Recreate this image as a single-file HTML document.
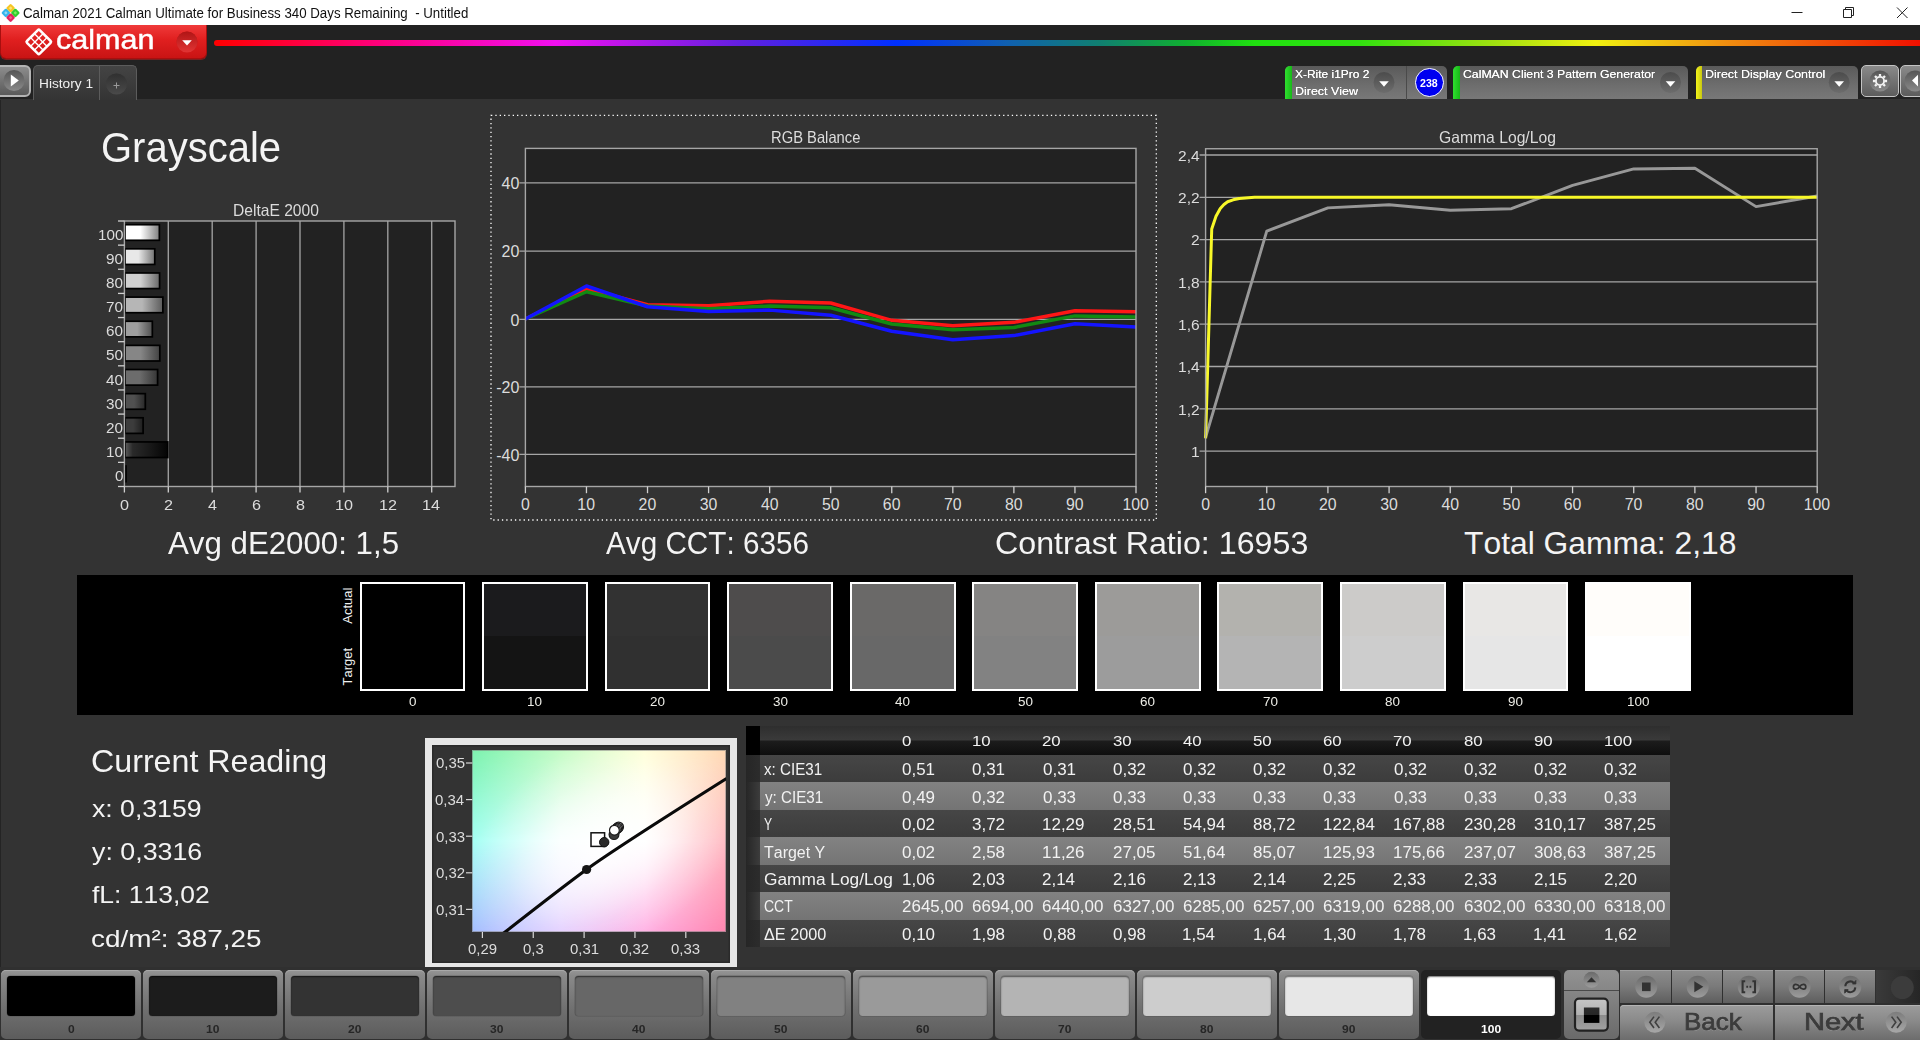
<!DOCTYPE html>
<html lang="en"><head><meta charset="utf-8"><title>Calman 2021 - Grayscale</title>
<style>
html,body{margin:0;padding:0;background:#333;}
body{width:1920px;height:1040px;overflow:hidden;position:relative;font-family:"Liberation Sans",sans-serif;font-kerning:none;}
.t{position:absolute;white-space:nowrap;line-height:1;transform-origin:0 0;}
.b{position:absolute;box-sizing:border-box;}
svg{position:absolute;left:0;top:0;overflow:visible;}
svg text{font-family:"Liberation Sans",sans-serif;font-kerning:none;}
</style></head><body>
<div class="b" style="left:0.00px;top:0.00px;width:1920.00px;height:25.30px;background:#fff;"></div>
<svg width="24" height="26" viewBox="0 0 24 26">
<g transform="translate(10.6,12.8) rotate(45)">
<rect x="-6.6" y="-6.6" width="6.7" height="6.7" rx="1.3" fill="#f6c624"/>
<rect x="0.1" y="-6.6" width="6.7" height="6.7" rx="1.3" fill="#2fd02f"/>
<rect x="-6.6" y="0.1" width="6.7" height="6.7" rx="1.3" fill="#35b4ec"/>
<rect x="0.1" y="0.1" width="6.7" height="6.7" rx="1.3" fill="#e3245f"/>
<rect x="-4.6" y="-4.6" width="2.6" height="2.6" rx=".6" fill="#fbe27a"/>
<rect x="2.1" y="-4.6" width="2.6" height="2.6" rx=".6" fill="#7cec5c"/>
<rect x="-4.6" y="2.1" width="2.6" height="2.6" rx=".6" fill="#8fd8f6"/>
<rect x="2.1" y="2.1" width="2.6" height="2.6" rx=".6" fill="#f0608a"/>
</g></svg>
<div class="t" style="left:22.72px;top:7.00px;font-size:13.95px;color:#111;transform:scaleX(0.9533);white-space:pre;">Calman 2021 Calman Ultimate for Business 340 Days Remaining  - Untitled</div>
<svg width="1920" height="26" viewBox="0 0 1920 26" fill="none" stroke="#222" stroke-width="1">
<path d="M1791.5 12.5H1802.5"/>
<path d="M1843.5 9.5h8v8h-8z M1845.5 9.5v-2h8v8h-2"/>
<path d="M1897 7.5l10.5 10.5M1907.5 7.5L1897 18"/>
</svg>
<div class="b" style="left:0.00px;top:25.30px;width:1920.00px;height:74.20px;background:#222;"></div>
<div class="b" style="left:0.00px;top:99.50px;width:1.20px;height:870.00px;background:#242424;"></div>
<div class="b" style="left:0.00px;top:25.30px;width:206.50px;height:33.70px;background:linear-gradient(#f03a3a,#e01f1f 45%,#c91414);border-radius:0 0 6px 6px;border:1px solid #a80f0f;border-top:none;box-shadow:0 1px 0 #7a2020;"></div>
<svg width="210" height="62" viewBox="0 0 210 62">
<g transform="translate(38.8,41.9) rotate(45) scale(1.07)" fill="#fff">
<path fill-rule="evenodd" d="M-9.6 -7.2a2.4 2.4 0 0 1 2.4 -2.4h14.4a2.4 2.4 0 0 1 2.4 2.4v14.4a2.4 2.4 0 0 1 -2.4 2.4h-14.4a2.4 2.4 0 0 1 -2.4 -2.4z
M-7.2 -7.2v4h4v-4z M-1.9 -7.2v4h3.8v-4z M3.2 -7.2v4h4v-4z
M-7.2 -1.9v3.8h4v-3.8z M-1.9 -1.9v3.8h3.8v-3.8z M3.2 -1.9v3.8h4v-3.8z
M-7.2 3.2v4h4v-4z M-1.9 3.2v4h3.8v-4z M3.2 3.2v4h4v-4z"/>
</g>
<circle cx="187" cy="42" r="10.5" fill="#c41a1a"/>
<circle cx="187" cy="42" r="10.5" fill="url(#ddred)"/>
<path d="M182.2 40.2h9.6l-4.8 5.2z" fill="#fff"/>
<defs><linearGradient id="ddred" x1="0" y1="0" x2="0" y2="1"><stop offset="0" stop-color="#b01515"/><stop offset="1" stop-color="#e23434"/></linearGradient></defs>
</svg>
<div class="t" style="left:55.90px;top:26.00px;font-size:27.60px;color:#fff;transform:scaleX(1.1069);-webkit-text-stroke:.45px #fff;">calman</div>
<div class="b" style="left:214.00px;top:40.00px;width:1706.00px;height:5.50px;background:linear-gradient(90deg,#ff0000 0,#ff0080 10%,#f010f0 20%,#6020e0 31%,#0030ff 40%,#1060b0 46.5%,#108070 52%,#10b030 57%,#20e010 61%,#30e010 67%,#a0e010 75%,#f0f010 81%,#f09010 88.5%,#f01000 100%);border-radius:3px 0 0 3px;"></div>
<div class="b" style="left:-3.00px;top:64.60px;width:34.00px;height:32.60px;background:linear-gradient(#8c8c8c,#5a5a5a);border:2px solid #b4b4b4;border-radius:0 6px 6px 0;"></div>
<svg width="40" height="100" viewBox="0 0 40 100">
<circle cx="14" cy="80.5" r="10.5" fill="url(#gbtn)"/>
<path d="M10.8 74.5l8 6l-8 6z" fill="#fff"/>
<defs><linearGradient id="gbtn" x1="0" y1="0" x2="0" y2="1"><stop offset="0" stop-color="#555"/><stop offset="1" stop-color="#8a8a8a"/></linearGradient></defs>
</svg>
<div class="b" style="left:33.00px;top:65.00px;width:104.00px;height:34.50px;background:linear-gradient(#444,#343434);border:1px solid #5c5c5c;border-bottom:none;border-radius:5px 5px 0 0;"></div>
<div class="b" style="left:99.00px;top:66.00px;width:1.20px;height:33.50px;background:#5c5c5c;"></div>
<div class="t" style="left:39.18px;top:77.00px;font-size:13.08px;color:#f0f0f0;transform:scaleX(1.0481);">History 1</div>
<svg width="140" height="100" viewBox="0 0 140 100">
<circle cx="116.5" cy="84" r="10.5" fill="#3a3a3a"/>
<circle cx="116.5" cy="84" r="10.5" fill="url(#gplus)"/>
<path d="M113.5 85.5h6M116.5 82.5v6" stroke="#9a9a9a" stroke-width="1"/>
<defs><linearGradient id="gplus" x1="0" y1="0" x2="0" y2="1"><stop offset="0" stop-color="#303030"/><stop offset="1" stop-color="#4a4a4a"/></linearGradient></defs>
</svg>
<svg width="10" height="10"><defs><linearGradient id="gdd" x1="0" y1="0" x2="0" y2="1"><stop offset="0" stop-color="#4c4c4c"/><stop offset="1" stop-color="#6c6c6c"/></linearGradient></defs></svg>
<div class="b" style="left:1285.00px;top:65.50px;width:161.50px;height:33.70px;background:linear-gradient(#5a5a5a,#6e6e6e 60%,#787878);border-radius:5px 5px 0 0;overflow:hidden;"><div class="b" style="left:0;top:0;width:6.5px;height:35px;background:linear-gradient(90deg,#2fe02f,#18b818)"></div></div>
<div class="b" style="left:1406.30px;top:66.00px;width:1.20px;height:34.00px;background:#4a4a4a;"></div>
<div class="t" style="left:1294.73px;top:69.00px;font-size:11.48px;color:#fff;transform:scaleX(1.0419);text-shadow:0 0 .6px #fff;">X-Rite i1Pro 2</div>
<div class="t" style="left:1294.58px;top:86.00px;font-size:11.48px;color:#fff;transform:scaleX(1.0849);text-shadow:0 0 .6px #fff;">Direct View</div>
<svg width="1920" height="110" viewBox="0 0 1920 110"><circle cx="1384" cy="82.5" r="10.5" fill="url(#gdd)"/><path d="M1379.2 81.3h9.6l-4.8 5.4z" fill="#fff"/></svg>
<div class="b" style="left:1414.50px;top:67.70px;width:29.00px;height:29.00px;background:#0000f0;border:1.3px solid #fff;border-radius:50%;"></div>
<div class="t" style="left:1420.23px;top:78.00px;font-size:10.76px;color:#fff;font-weight:bold;transform:scaleX(0.9860);">238</div>
<div class="b" style="left:1453.00px;top:65.50px;width:235.30px;height:33.70px;background:linear-gradient(#5a5a5a,#6e6e6e 60%,#787878);border-radius:5px 5px 0 0;overflow:hidden;"><div class="b" style="left:0;top:0;width:6.5px;height:35px;background:linear-gradient(90deg,#2fe02f,#18b818)"></div></div>
<div class="t" style="left:1462.78px;top:69.00px;font-size:11.48px;color:#fff;transform:scaleX(1.0692);text-shadow:0 0 .6px #fff;">CalMAN Client 3 Pattern Generator</div>
<svg width="1920" height="110" viewBox="0 0 1920 110"><circle cx="1670.5" cy="82.5" r="10.5" fill="url(#gdd)"/><path d="M1665.7 81.3h9.6l-4.8 5.4z" fill="#fff"/></svg>
<div class="b" style="left:1695.70px;top:65.50px;width:161.90px;height:33.70px;background:linear-gradient(#5a5a5a,#6e6e6e 60%,#787878);border-radius:5px 5px 0 0;overflow:hidden;"><div class="b" style="left:0;top:0;width:6.5px;height:35px;background:linear-gradient(90deg,#f4f41a,#c8c810)"></div></div>
<div class="t" style="left:1704.98px;top:69.00px;font-size:11.48px;color:#fff;transform:scaleX(1.0849);text-shadow:0 0 .6px #fff;">Direct Display Control</div>
<svg width="1920" height="110" viewBox="0 0 1920 110"><circle cx="1839.2" cy="82.5" r="10.5" fill="url(#gdd)"/><path d="M1834.4 81.3h9.6l-4.8 5.4z" fill="#fff"/></svg>
<div class="b" style="left:1861.00px;top:65.00px;width:38.00px;height:31.80px;background:linear-gradient(#8a8a8a,#5c5c5c);border:1px solid #c4c4c4;border-radius:5px;"></div>
<div class="b" style="left:1900.00px;top:65.00px;width:26.00px;height:31.80px;background:linear-gradient(#8a8a8a,#5c5c5c);border:1px solid #c4c4c4;border-radius:5px;"></div>
<svg width="1920" height="110" viewBox="0 0 1920 110">
<circle cx="1880" cy="81" r="10.5" fill="url(#gbtn)"/>
<circle cx="1915" cy="81" r="10.5" fill="url(#gbtn)"/>
<g transform="translate(1880,81)" fill="none" stroke="#f2f2f2">
<circle r="4.1" stroke-width="1.9"/>
<g stroke-width="2.3"><path d="M0 -7.1V-4.8M0 7.1V4.8M-7.1 0H-4.8M7.1 0H4.8M-5 -5L-3.4 -3.4M5 5L3.4 3.4M-5 5L-3.4 3.4M5 -5L3.4 -3.4"/></g>
</g>
<path d="M1918 74.8v11.6l-6 -5.8z" fill="#fff"/>
</svg>
<div class="t" style="left:100.99px;top:126.00px;font-size:42.73px;color:#f4f4f4;transform:scaleX(0.9367);">Grayscale</div>
<div class="t" style="left:233.12px;top:202.00px;font-size:16.28px;color:#dcdcdc;transform:scaleX(0.9597);">DeltaE 2000</div>
<div class="t" style="left:97.82px;top:227.00px;font-size:15.12px;color:#dcdcdc;transform:scaleX(1.0100);">100</div>
<div class="t" style="left:106.31px;top:251.00px;font-size:15.12px;color:#dcdcdc;transform:scaleX(1.0100);">90</div>
<div class="t" style="left:106.31px;top:275.00px;font-size:15.12px;color:#dcdcdc;transform:scaleX(1.0100);">80</div>
<div class="t" style="left:106.31px;top:299.00px;font-size:15.12px;color:#dcdcdc;transform:scaleX(1.0100);">70</div>
<div class="t" style="left:106.31px;top:323.00px;font-size:15.12px;color:#dcdcdc;transform:scaleX(1.0100);">60</div>
<div class="t" style="left:106.31px;top:347.00px;font-size:15.12px;color:#dcdcdc;transform:scaleX(1.0100);">50</div>
<div class="t" style="left:106.31px;top:372.00px;font-size:15.12px;color:#dcdcdc;transform:scaleX(1.0100);">40</div>
<div class="t" style="left:106.31px;top:396.00px;font-size:15.12px;color:#dcdcdc;transform:scaleX(1.0100);">30</div>
<div class="t" style="left:106.31px;top:420.00px;font-size:15.12px;color:#dcdcdc;transform:scaleX(1.0100);">20</div>
<div class="t" style="left:106.31px;top:444.00px;font-size:15.12px;color:#dcdcdc;transform:scaleX(1.0100);">10</div>
<div class="t" style="left:114.81px;top:468.00px;font-size:15.12px;color:#dcdcdc;transform:scaleX(1.0100);">0</div>
<div class="t" style="left:119.90px;top:497.00px;font-size:15.55px;color:#dcdcdc;transform:scaleX(1.0400);">0</div>
<div class="t" style="left:163.80px;top:497.00px;font-size:15.55px;color:#dcdcdc;transform:scaleX(1.0400);">2</div>
<div class="t" style="left:207.75px;top:497.00px;font-size:15.55px;color:#dcdcdc;transform:scaleX(1.0400);">4</div>
<div class="t" style="left:251.55px;top:497.00px;font-size:15.55px;color:#dcdcdc;transform:scaleX(1.0400);">6</div>
<div class="t" style="left:295.50px;top:497.00px;font-size:15.55px;color:#dcdcdc;transform:scaleX(1.0400);">8</div>
<div class="t" style="left:334.60px;top:497.00px;font-size:15.55px;color:#dcdcdc;transform:scaleX(1.0400);">10</div>
<div class="t" style="left:378.60px;top:497.00px;font-size:15.55px;color:#dcdcdc;transform:scaleX(1.0400);">12</div>
<div class="t" style="left:422.33px;top:497.00px;font-size:15.55px;color:#dcdcdc;transform:scaleX(1.0400);">14</div>
<div class="t" style="left:771.19px;top:129.00px;font-size:16.28px;color:#dcdcdc;transform:scaleX(0.9071);">RGB Balance</div>
<div class="t" style="left:501.54px;top:176.00px;font-size:15.99px;color:#dcdcdc;">40</div>
<div class="t" style="left:501.54px;top:244.00px;font-size:15.99px;color:#dcdcdc;">20</div>
<div class="t" style="left:510.43px;top:313.00px;font-size:15.99px;color:#dcdcdc;">0</div>
<div class="t" style="left:496.22px;top:380.00px;font-size:15.99px;color:#dcdcdc;">-20</div>
<div class="t" style="left:496.22px;top:448.00px;font-size:15.99px;color:#dcdcdc;">-40</div>
<div class="t" style="left:520.99px;top:497.00px;font-size:15.84px;color:#dcdcdc;">0</div>
<div class="t" style="left:577.35px;top:497.00px;font-size:15.84px;color:#dcdcdc;">10</div>
<div class="t" style="left:638.62px;top:497.00px;font-size:15.84px;color:#dcdcdc;">20</div>
<div class="t" style="left:699.78px;top:497.00px;font-size:15.84px;color:#dcdcdc;">30</div>
<div class="t" style="left:760.96px;top:497.00px;font-size:15.84px;color:#dcdcdc;">40</div>
<div class="t" style="left:821.88px;top:497.00px;font-size:15.84px;color:#dcdcdc;">50</div>
<div class="t" style="left:882.86px;top:497.00px;font-size:15.84px;color:#dcdcdc;">60</div>
<div class="t" style="left:943.91px;top:497.00px;font-size:15.84px;color:#dcdcdc;">70</div>
<div class="t" style="left:1005.03px;top:497.00px;font-size:15.84px;color:#dcdcdc;">80</div>
<div class="t" style="left:1066.07px;top:497.00px;font-size:15.84px;color:#dcdcdc;">90</div>
<div class="t" style="left:1122.49px;top:497.00px;font-size:15.84px;color:#dcdcdc;">100</div>
<div class="t" style="left:1439.41px;top:129.00px;font-size:16.28px;color:#dcdcdc;transform:scaleX(0.9649);">Gamma Log/Log</div>
<div class="t" style="left:1177.52px;top:148.00px;font-size:15.26px;color:#dcdcdc;transform:scaleX(1.0200);">2,4</div>
<div class="t" style="left:1177.84px;top:190.00px;font-size:15.26px;color:#dcdcdc;transform:scaleX(1.0200);">2,2</div>
<div class="t" style="left:1190.83px;top:232.00px;font-size:15.26px;color:#dcdcdc;transform:scaleX(1.0200);">2</div>
<div class="t" style="left:1177.74px;top:275.00px;font-size:15.26px;color:#dcdcdc;transform:scaleX(1.0200);">1,8</div>
<div class="t" style="left:1177.74px;top:317.00px;font-size:15.26px;color:#dcdcdc;transform:scaleX(1.0200);">1,6</div>
<div class="t" style="left:1177.52px;top:359.00px;font-size:15.26px;color:#dcdcdc;transform:scaleX(1.0200);">1,4</div>
<div class="t" style="left:1177.84px;top:402.00px;font-size:15.26px;color:#dcdcdc;transform:scaleX(1.0200);">1,2</div>
<div class="t" style="left:1190.80px;top:444.00px;font-size:15.26px;color:#dcdcdc;transform:scaleX(1.0200);">1</div>
<div class="t" style="left:1201.19px;top:497.00px;font-size:15.84px;color:#dcdcdc;">0</div>
<div class="t" style="left:1257.65px;top:497.00px;font-size:15.84px;color:#dcdcdc;">10</div>
<div class="t" style="left:1319.02px;top:497.00px;font-size:15.84px;color:#dcdcdc;">20</div>
<div class="t" style="left:1380.28px;top:497.00px;font-size:15.84px;color:#dcdcdc;">30</div>
<div class="t" style="left:1441.56px;top:497.00px;font-size:15.84px;color:#dcdcdc;">40</div>
<div class="t" style="left:1502.58px;top:497.00px;font-size:15.84px;color:#dcdcdc;">50</div>
<div class="t" style="left:1563.66px;top:497.00px;font-size:15.84px;color:#dcdcdc;">60</div>
<div class="t" style="left:1624.81px;top:497.00px;font-size:15.84px;color:#dcdcdc;">70</div>
<div class="t" style="left:1686.03px;top:497.00px;font-size:15.84px;color:#dcdcdc;">80</div>
<div class="t" style="left:1747.17px;top:497.00px;font-size:15.84px;color:#dcdcdc;">90</div>
<div class="t" style="left:1803.69px;top:497.00px;font-size:15.84px;color:#dcdcdc;">100</div>
<svg width="1920" height="1040" viewBox="0 0 1920 1040"><rect x="124.4" y="221" width="330.6" height="265.5" fill="#222"/>
<path d="M168.30 221V486.5" stroke="#9c9c9c" stroke-width="1.4"/>
<path d="M212.20 221V486.5" stroke="#9c9c9c" stroke-width="1.4"/>
<path d="M256.10 221V486.5" stroke="#9c9c9c" stroke-width="1.4"/>
<path d="M300.00 221V486.5" stroke="#9c9c9c" stroke-width="1.4"/>
<path d="M343.90 221V486.5" stroke="#9c9c9c" stroke-width="1.4"/>
<path d="M387.80 221V486.5" stroke="#9c9c9c" stroke-width="1.4"/>
<path d="M431.70 221V486.5" stroke="#9c9c9c" stroke-width="1.4"/>
<defs>
<linearGradient id="bar100" x1="0" y1="0" x2="1" y2="0"><stop offset="0" stop-color="#ffffff"/><stop offset="0.45" stop-color="#ffffff"/><stop offset="1" stop-color="#7f7f7f"/></linearGradient>
<linearGradient id="bar90" x1="0" y1="0" x2="1" y2="0"><stop offset="0" stop-color="#e8e8e8"/><stop offset="0.45" stop-color="#e8e8e8"/><stop offset="1" stop-color="#747474"/></linearGradient>
<linearGradient id="bar80" x1="0" y1="0" x2="1" y2="0"><stop offset="0" stop-color="#d0d0d0"/><stop offset="0.45" stop-color="#d0d0d0"/><stop offset="1" stop-color="#686868"/></linearGradient>
<linearGradient id="bar70" x1="0" y1="0" x2="1" y2="0"><stop offset="0" stop-color="#b6b6b6"/><stop offset="0.45" stop-color="#b6b6b6"/><stop offset="1" stop-color="#5b5b5b"/></linearGradient>
<linearGradient id="bar60" x1="0" y1="0" x2="1" y2="0"><stop offset="0" stop-color="#9e9e9e"/><stop offset="0.45" stop-color="#9e9e9e"/><stop offset="1" stop-color="#4f4f4f"/></linearGradient>
<linearGradient id="bar50" x1="0" y1="0" x2="1" y2="0"><stop offset="0" stop-color="#868686"/><stop offset="0.45" stop-color="#868686"/><stop offset="1" stop-color="#434343"/></linearGradient>
<linearGradient id="bar40" x1="0" y1="0" x2="1" y2="0"><stop offset="0" stop-color="#6c6c6c"/><stop offset="0.45" stop-color="#6c6c6c"/><stop offset="1" stop-color="#363636"/></linearGradient>
<linearGradient id="bar30" x1="0" y1="0" x2="1" y2="0"><stop offset="0" stop-color="#505050"/><stop offset="0.45" stop-color="#505050"/><stop offset="1" stop-color="#282828"/></linearGradient>
<linearGradient id="bar20" x1="0" y1="0" x2="1" y2="0"><stop offset="0" stop-color="#3c3c3c"/><stop offset="0.45" stop-color="#3c3c3c"/><stop offset="1" stop-color="#1e1e1e"/></linearGradient>
<linearGradient id="bar10" x1="0" y1="0" x2="1" y2="0"><stop offset="0" stop-color="#5c5c5c"/><stop offset="0.18" stop-color="#2a2a2a"/><stop offset="0.55" stop-color="#1a1a1a"/><stop offset="1" stop-color="#040404"/></linearGradient>
<linearGradient id="bar0" x1="0" y1="0" x2="1" y2="0"><stop offset="0" stop-color="#000000"/><stop offset="0.45" stop-color="#000000"/><stop offset="1" stop-color="#000000"/></linearGradient>
</defs>
<rect x="125.00" y="224.70" width="34.36" height="15.60" fill="url(#bar100)" stroke="#000" stroke-width="1.7"/>
<rect x="125.00" y="248.84" width="29.75" height="15.60" fill="url(#bar90)" stroke="#000" stroke-width="1.7"/>
<rect x="125.00" y="272.97" width="34.58" height="15.60" fill="url(#bar80)" stroke="#000" stroke-width="1.7"/>
<rect x="125.00" y="297.11" width="37.87" height="15.60" fill="url(#bar70)" stroke="#000" stroke-width="1.7"/>
<rect x="125.00" y="321.25" width="27.34" height="15.60" fill="url(#bar60)" stroke="#000" stroke-width="1.7"/>
<rect x="125.00" y="345.38" width="34.80" height="15.60" fill="url(#bar50)" stroke="#000" stroke-width="1.7"/>
<rect x="125.00" y="369.52" width="32.60" height="15.60" fill="url(#bar40)" stroke="#000" stroke-width="1.7"/>
<rect x="125.00" y="393.65" width="20.31" height="15.60" fill="url(#bar30)" stroke="#000" stroke-width="1.7"/>
<rect x="125.00" y="417.79" width="18.12" height="15.60" fill="url(#bar20)" stroke="#000" stroke-width="1.7"/>
<rect x="125.00" y="441.93" width="42.76" height="15.60" fill="url(#bar10)" stroke="#000" stroke-width="1.7"/>
<rect x="125.00" y="466.06" width="0.99" height="15.60" fill="url(#bar0)" stroke="#000" stroke-width="1.7"/>
<rect x="124.4" y="221" width="330.6" height="265.5" fill="none" stroke="#a6a6a6" stroke-width="1.4"/>
<path d="M118 221.00H124.4" stroke="#d0d0d0" stroke-width="1.3"/>
<path d="M118 245.14H124.4" stroke="#d0d0d0" stroke-width="1.3"/>
<path d="M118 269.27H124.4" stroke="#d0d0d0" stroke-width="1.3"/>
<path d="M118 293.41H124.4" stroke="#d0d0d0" stroke-width="1.3"/>
<path d="M118 317.55H124.4" stroke="#d0d0d0" stroke-width="1.3"/>
<path d="M118 341.68H124.4" stroke="#d0d0d0" stroke-width="1.3"/>
<path d="M118 365.82H124.4" stroke="#d0d0d0" stroke-width="1.3"/>
<path d="M118 389.95H124.4" stroke="#d0d0d0" stroke-width="1.3"/>
<path d="M118 414.09H124.4" stroke="#d0d0d0" stroke-width="1.3"/>
<path d="M118 438.23H124.4" stroke="#d0d0d0" stroke-width="1.3"/>
<path d="M118 462.36H124.4" stroke="#d0d0d0" stroke-width="1.3"/>
<path d="M118 486.50H124.4" stroke="#d0d0d0" stroke-width="1.3"/>
<path d="M124.40 486.5V492.5" stroke="#d0d0d0" stroke-width="1.3"/>
<path d="M168.30 486.5V492.5" stroke="#d0d0d0" stroke-width="1.3"/>
<path d="M212.20 486.5V492.5" stroke="#d0d0d0" stroke-width="1.3"/>
<path d="M256.10 486.5V492.5" stroke="#d0d0d0" stroke-width="1.3"/>
<path d="M300.00 486.5V492.5" stroke="#d0d0d0" stroke-width="1.3"/>
<path d="M343.90 486.5V492.5" stroke="#d0d0d0" stroke-width="1.3"/>
<path d="M387.80 486.5V492.5" stroke="#d0d0d0" stroke-width="1.3"/>
<path d="M431.70 486.5V492.5" stroke="#d0d0d0" stroke-width="1.3"/>
<rect x="491" y="115.4" width="665.3" height="404.6" fill="none" stroke="#fff" stroke-width="1.3" stroke-dasharray="1.3 3.04"/>
<rect x="525.4" y="148.4" width="610.6" height="338.1" fill="#222"/>
<path d="M519.4 182.90H1136" stroke="#a6a6a6" stroke-width="1.3"/>
<path d="M519.4 251.10H1136" stroke="#a6a6a6" stroke-width="1.3"/>
<path d="M519.4 319.30H1136" stroke="#a6a6a6" stroke-width="1.3"/>
<path d="M519.4 386.90H1136" stroke="#a6a6a6" stroke-width="1.3"/>
<path d="M519.4 454.40H1136" stroke="#a6a6a6" stroke-width="1.3"/>
<clipPath id="rclip"><rect x="525.4" y="148.4" width="610.6" height="338.1"/></clipPath>
<polyline points="525.40,318.96 586.46,288.70 647.52,304.68 708.58,305.70 769.64,301.28 830.70,302.98 891.76,320.32 952.82,325.76 1013.88,322.36 1074.94,310.80 1136.00,311.82" fill="none" stroke="#ff1616" stroke-width="3.5" stroke-linejoin="round" clip-path="url(#rclip)"/>
<polyline points="525.40,318.96 586.46,291.76 647.52,306.04 708.58,308.76 769.64,306.04 830.70,307.74 891.76,324.06 952.82,329.84 1013.88,327.46 1074.94,315.90 1136.00,316.92" fill="none" stroke="#128a12" stroke-width="3.5" stroke-linejoin="round" clip-path="url(#rclip)"/>
<polyline points="525.40,318.96 586.46,285.98 647.52,306.72 708.58,311.48 769.64,310.12 830.70,315.22 891.76,331.20 952.82,339.70 1013.88,335.62 1074.94,323.72 1136.00,327.12" fill="none" stroke="#1414ff" stroke-width="3.5" stroke-linejoin="round" clip-path="url(#rclip)"/>
<rect x="525.4" y="148.4" width="610.6" height="338.1" fill="none" stroke="#a6a6a6" stroke-width="1.4"/>
<path d="M525.40 486.5V493.2" stroke="#d0d0d0" stroke-width="1.3"/>
<path d="M586.46 486.5V493.2" stroke="#d0d0d0" stroke-width="1.3"/>
<path d="M647.52 486.5V493.2" stroke="#d0d0d0" stroke-width="1.3"/>
<path d="M708.58 486.5V493.2" stroke="#d0d0d0" stroke-width="1.3"/>
<path d="M769.64 486.5V493.2" stroke="#d0d0d0" stroke-width="1.3"/>
<path d="M830.70 486.5V493.2" stroke="#d0d0d0" stroke-width="1.3"/>
<path d="M891.76 486.5V493.2" stroke="#d0d0d0" stroke-width="1.3"/>
<path d="M952.82 486.5V493.2" stroke="#d0d0d0" stroke-width="1.3"/>
<path d="M1013.88 486.5V493.2" stroke="#d0d0d0" stroke-width="1.3"/>
<path d="M1074.94 486.5V493.2" stroke="#d0d0d0" stroke-width="1.3"/>
<path d="M1136.00 486.5V493.2" stroke="#d0d0d0" stroke-width="1.3"/>
<rect x="1205.6" y="148.75" width="611.6" height="337.75" fill="#222"/>
<path d="M1199.6 155.00H1817.2" stroke="#a6a6a6" stroke-width="1.3"/>
<path d="M1199.6 197.30H1817.2" stroke="#a6a6a6" stroke-width="1.3"/>
<path d="M1199.6 239.60H1817.2" stroke="#a6a6a6" stroke-width="1.3"/>
<path d="M1199.6 281.90H1817.2" stroke="#a6a6a6" stroke-width="1.3"/>
<path d="M1199.6 324.20H1817.2" stroke="#a6a6a6" stroke-width="1.3"/>
<path d="M1199.6 366.50H1817.2" stroke="#a6a6a6" stroke-width="1.3"/>
<path d="M1199.6 408.80H1817.2" stroke="#a6a6a6" stroke-width="1.3"/>
<path d="M1199.6 451.10H1817.2" stroke="#a6a6a6" stroke-width="1.3"/>
<clipPath id="gclip"><rect x="1203.6" y="148.75" width="615.6" height="337.75"/></clipPath>
<polyline points="1205.60,437.35 1266.76,231.14 1327.92,207.88 1389.08,204.70 1450.24,210.20 1511.40,208.72 1572.56,185.46 1633.72,168.96 1694.88,168.32 1756.04,206.61 1817.20,196.03" fill="none" stroke="#989898" stroke-width="2.9" stroke-linejoin="round" clip-path="url(#gclip)"/>
<polyline points="1205.60,438.41 1211.72,229.03 1216.00,216.34 1220.28,208.51 1223.95,204.49 1227.62,201.74 1233.12,199.84 1239.24,198.57 1254.53,197.30 1817.20,197.30" fill="none" stroke="#f8f828" stroke-width="3" stroke-linejoin="round" clip-path="url(#gclip)"/>
<rect x="1205.6" y="148.75" width="611.6" height="337.75" fill="none" stroke="#a6a6a6" stroke-width="1.4"/>
<path d="M1205.60 486.5V493.2" stroke="#d0d0d0" stroke-width="1.3"/>
<path d="M1266.76 486.5V493.2" stroke="#d0d0d0" stroke-width="1.3"/>
<path d="M1327.92 486.5V493.2" stroke="#d0d0d0" stroke-width="1.3"/>
<path d="M1389.08 486.5V493.2" stroke="#d0d0d0" stroke-width="1.3"/>
<path d="M1450.24 486.5V493.2" stroke="#d0d0d0" stroke-width="1.3"/>
<path d="M1511.40 486.5V493.2" stroke="#d0d0d0" stroke-width="1.3"/>
<path d="M1572.56 486.5V493.2" stroke="#d0d0d0" stroke-width="1.3"/>
<path d="M1633.72 486.5V493.2" stroke="#d0d0d0" stroke-width="1.3"/>
<path d="M1694.88 486.5V493.2" stroke="#d0d0d0" stroke-width="1.3"/>
<path d="M1756.04 486.5V493.2" stroke="#d0d0d0" stroke-width="1.3"/>
<path d="M1817.20 486.5V493.2" stroke="#d0d0d0" stroke-width="1.3"/></svg>
<div class="t" style="left:168.14px;top:528.00px;font-size:31.83px;color:#f4f4f4;transform:scaleX(0.9817);">Avg dE2000: 1,5</div>
<div class="t" style="left:606.34px;top:528.00px;font-size:31.83px;color:#f4f4f4;transform:scaleX(0.9327);">Avg CCT: 6356</div>
<div class="t" style="left:995.46px;top:528.00px;font-size:31.83px;color:#f4f4f4;transform:scaleX(1.0119);">Contrast Ratio: 16953</div>
<div class="t" style="left:1463.99px;top:528.00px;font-size:31.83px;color:#f4f4f4;">Total Gamma: 2,18</div>
<div class="b" style="left:77.00px;top:575.30px;width:1776.00px;height:139.60px;background:#000;"></div>
<div class="b" style="left:359.60px;top:582.00px;width:105.80px;height:109.20px;border:2px solid #fff;background:linear-gradient(#000000 0,#000000 49.5%,#000000 49.5%,#000000 100%);"></div>
<div class="t" style="left:408.76px;top:696.00px;font-size:12.94px;color:#ecece6;transform:scaleX(1.0400);">0</div>
<div class="b" style="left:482.15px;top:582.00px;width:105.80px;height:109.20px;border:2px solid #fff;background:linear-gradient(#1b1b1d 0,#1b1b1d 49.5%,#141414 49.5%,#141414 100%);"></div>
<div class="t" style="left:527.32px;top:696.00px;font-size:12.94px;color:#ecece6;transform:scaleX(1.0400);">10</div>
<div class="b" style="left:604.70px;top:582.00px;width:105.80px;height:109.20px;border:2px solid #fff;background:linear-gradient(#323232 0,#323232 49.5%,#303030 49.5%,#303030 100%);"></div>
<div class="t" style="left:650.04px;top:696.00px;font-size:12.94px;color:#ecece6;transform:scaleX(1.0400);">20</div>
<div class="b" style="left:727.25px;top:582.00px;width:105.80px;height:109.20px;border:2px solid #fff;background:linear-gradient(#4e4c4c 0,#4e4c4c 49.5%,#4b4b4b 49.5%,#4b4b4b 100%);"></div>
<div class="t" style="left:772.67px;top:696.00px;font-size:12.94px;color:#ecece6;transform:scaleX(1.0400);">30</div>
<div class="b" style="left:849.80px;top:582.00px;width:105.80px;height:109.20px;border:2px solid #fff;background:linear-gradient(#6a6968 0,#6a6968 49.5%,#686868 49.5%,#686868 100%);"></div>
<div class="t" style="left:895.33px;top:696.00px;font-size:12.94px;color:#ecece6;transform:scaleX(1.0400);">40</div>
<div class="b" style="left:972.35px;top:582.00px;width:105.80px;height:109.20px;border:2px solid #fff;background:linear-gradient(#858483 0,#858483 49.5%,#828282 49.5%,#828282 100%);"></div>
<div class="t" style="left:1017.76px;top:696.00px;font-size:12.94px;color:#ecece6;transform:scaleX(1.0400);">50</div>
<div class="b" style="left:1094.90px;top:582.00px;width:105.80px;height:109.20px;border:2px solid #fff;background:linear-gradient(#9c9b99 0,#9c9b99 49.5%,#9c9c9c 49.5%,#9c9c9c 100%);"></div>
<div class="t" style="left:1140.24px;top:696.00px;font-size:12.94px;color:#ecece6;transform:scaleX(1.0400);">60</div>
<div class="b" style="left:1217.45px;top:582.00px;width:105.80px;height:109.20px;border:2px solid #fff;background:linear-gradient(#b3b2ae 0,#b3b2ae 49.5%,#b4b4b4 49.5%,#b4b4b4 100%);"></div>
<div class="t" style="left:1262.79px;top:696.00px;font-size:12.94px;color:#ecece6;transform:scaleX(1.0400);">70</div>
<div class="b" style="left:1340.00px;top:582.00px;width:105.80px;height:109.20px;border:2px solid #fff;background:linear-gradient(#cccbc9 0,#cccbc9 49.5%,#cdcdcd 49.5%,#cdcdcd 100%);"></div>
<div class="t" style="left:1385.39px;top:696.00px;font-size:12.94px;color:#ecece6;transform:scaleX(1.0400);">80</div>
<div class="b" style="left:1462.55px;top:582.00px;width:105.80px;height:109.20px;border:2px solid #fff;background:linear-gradient(#e8e7e5 0,#e8e7e5 49.5%,#e6e6e6 49.5%,#e6e6e6 100%);"></div>
<div class="t" style="left:1507.92px;top:696.00px;font-size:12.94px;color:#ecece6;transform:scaleX(1.0400);">90</div>
<div class="b" style="left:1585.10px;top:582.00px;width:105.80px;height:109.20px;border:2px solid #fff;background:linear-gradient(#fffdfa 0,#fffdfa 49.5%,#ffffff 49.5%,#ffffff 100%);"></div>
<div class="t" style="left:1626.53px;top:696.00px;font-size:12.94px;color:#ecece6;transform:scaleX(1.0400);">100</div>
<div class="t" style="left:328.98px;top:598.90px;width:37.24px;height:13.40px;font-size:13.40px;color:#f0f0f0;transform-origin:50% 50%;transform:rotate(-90deg) scaleX(0.970);text-align:center;">Actual</div>
<div class="t" style="left:328.24px;top:660.30px;width:38.73px;height:13.40px;font-size:13.40px;color:#f0f0f0;transform-origin:50% 50%;transform:rotate(-90deg) scaleX(0.970);text-align:center;">Target</div>
<div class="t" style="left:90.56px;top:746.00px;font-size:31.54px;color:#f4f4f4;transform:scaleX(1.0211);">Current Reading</div>
<div class="t" style="left:91.90px;top:797.00px;font-size:24.13px;color:#f4f4f4;transform:scaleX(1.1037);">x: 0,3159</div>
<div class="t" style="left:92.13px;top:840.00px;font-size:24.13px;color:#f4f4f4;transform:scaleX(1.1105);">y: 0,3316</div>
<div class="t" style="left:92.12px;top:883.00px;font-size:24.13px;color:#f4f4f4;transform:scaleX(1.0976);">fL: 113,02</div>
<div class="t" style="left:91.31px;top:927.00px;font-size:24.13px;color:#f4f4f4;transform:scaleX(1.1568);">cd/m²: 387,25</div>
<div class="b" style="left:424.70px;top:738.20px;width:312.10px;height:231.40px;background:#333;border:7.5px solid #e6e6e6;box-shadow:inset 0 0 0 1.5px #2a2a2a;"></div>
<div class="b" style="left:472.30px;top:749.50px;width:253.90px;height:182.60px;background:linear-gradient(90deg,#a2bcff 0,#e0c8ff 35%,#ffb0e4 68%,#ff86b0 100%);"></div>
<div class="b" style="left:472.30px;top:749.50px;width:253.90px;height:182.60px;background:linear-gradient(90deg,#a4fff4 0,#f4ffff 35%,#ffffff 68%,#ffb8c0 100%);-webkit-mask-image:linear-gradient(#000 0,#000 50%,transparent 100%);mask-image:linear-gradient(#000 0,#000 50%,transparent 100%);"></div>
<div class="b" style="left:472.30px;top:749.50px;width:253.90px;height:182.60px;background:linear-gradient(90deg,#7cf2ae 0,#c4fcc6 35%,#ffffd4 68%,#ffd6b0 100%);-webkit-mask-image:linear-gradient(#000 0,transparent 50%);mask-image:linear-gradient(#000 0,transparent 50%);"></div>
<div class="b" style="left:472.30px;top:749.50px;width:253.90px;height:182.60px;overflow:hidden;box-shadow:inset 0 0 0 1px rgba(120,120,120,.55);"><div class="b" style="left:-88.8px;top:-124.5px;width:440px;height:440px;transform:rotate(-35deg);background:radial-gradient(ellipse 37% 23% at 50% 50%,rgba(255,255,255,.97) 0,rgba(255,255,255,.62) 33%,rgba(255,255,255,.22) 66%,rgba(255,255,255,0) 100%);"></div></div>
<div class="t" style="left:435.50px;top:755.00px;font-size:15.12px;color:#dcdcdc;transform:scaleX(0.9900);">0,35</div>
<div class="t" style="left:435.31px;top:792.00px;font-size:15.12px;color:#dcdcdc;transform:scaleX(0.9900);">0,34</div>
<div class="t" style="left:435.53px;top:829.00px;font-size:15.12px;color:#dcdcdc;transform:scaleX(0.9900);">0,33</div>
<div class="t" style="left:435.63px;top:865.00px;font-size:15.12px;color:#dcdcdc;transform:scaleX(0.9900);">0,32</div>
<div class="t" style="left:435.60px;top:902.00px;font-size:15.12px;color:#dcdcdc;transform:scaleX(0.9900);">0,31</div>
<div class="t" style="left:467.90px;top:941.00px;font-size:15.12px;color:#dcdcdc;transform:scaleX(0.9900);">0,29</div>
<div class="t" style="left:522.88px;top:941.00px;font-size:15.12px;color:#dcdcdc;transform:scaleX(0.9900);">0,3</div>
<div class="t" style="left:569.61px;top:941.00px;font-size:15.12px;color:#dcdcdc;transform:scaleX(0.9900);">0,31</div>
<div class="t" style="left:620.47px;top:941.00px;font-size:15.12px;color:#dcdcdc;transform:scaleX(0.9900);">0,32</div>
<div class="t" style="left:671.27px;top:941.00px;font-size:15.12px;color:#dcdcdc;transform:scaleX(0.9900);">0,33</div>
<svg width="1920" height="1040" viewBox="0 0 1920 1040"><clipPath id="cclip"><rect x="472.3" y="749.5" width="253.9" height="182.6"/></clipPath>
<path d="M500 936 Q560 889 586.5 869.5 T726.5 778.5" fill="none" stroke="#0a0a0a" stroke-width="3.2" clip-path="url(#cclip)"/>
<circle cx="586.6" cy="869.5" r="4.6" fill="#151515"/>
<rect x="591" y="832.8" width="13.6" height="13.6" fill="#fff" stroke="#111" stroke-width="1.5"/>
<circle cx="604.2" cy="842.2" r="4.7" fill="#2a2a2a" stroke="#111" stroke-width="1"/>
<circle cx="614" cy="834.6" r="4.9" fill="#3a3a3a" stroke="#1a1a1a" stroke-width="1.2"/>
<circle cx="618.6" cy="827" r="4.9" fill="#ddd" stroke="#1a1a1a" stroke-width="1.2"/>
<circle cx="617.6" cy="828" r="4.9" fill="#eee" stroke="#1a1a1a" stroke-width="1.2"/>
<circle cx="616.6" cy="828.8" r="4.9" fill="#eee" stroke="#1a1a1a" stroke-width="1.2"/>
<circle cx="615.4" cy="829.6" r="4.9" fill="#f4f4f4" stroke="#1a1a1a" stroke-width="1.2"/>
<circle cx="614.4" cy="830.2" r="4.9" fill="#fff" stroke="#1a1a1a" stroke-width="1.2"/>
<path d="M466 763.00H472.3" stroke="#d8d8d8" stroke-width="1.2"/>
<path d="M466 799.60H472.3" stroke="#d8d8d8" stroke-width="1.2"/>
<path d="M466 836.20H472.3" stroke="#d8d8d8" stroke-width="1.2"/>
<path d="M466 872.80H472.3" stroke="#d8d8d8" stroke-width="1.2"/>
<path d="M466 909.40H472.3" stroke="#d8d8d8" stroke-width="1.2"/>
<path d="M482.40 932V938" stroke="#d8d8d8" stroke-width="1.2"/>
<path d="M533.25 932V938" stroke="#d8d8d8" stroke-width="1.2"/>
<path d="M584.10 932V938" stroke="#d8d8d8" stroke-width="1.2"/>
<path d="M634.95 932V938" stroke="#d8d8d8" stroke-width="1.2"/>
<path d="M685.80 932V938" stroke="#d8d8d8" stroke-width="1.2"/></svg>
<div class="b" style="left:745.50px;top:725.50px;width:924.50px;height:29.20px;background:linear-gradient(#2e2e2e 0,#3a3a3a 48%,#1c1c1c 52%,#0e0e0e 100%);"></div>
<div class="b" style="left:745.50px;top:725.50px;width:14.50px;height:29.20px;background:#000;"></div>
<div class="t" style="left:902.24px;top:733.00px;font-size:15.55px;color:#f2f2f2;transform:scaleX(1.0800);">0</div>
<div class="t" style="left:971.82px;top:733.00px;font-size:15.55px;color:#f2f2f2;transform:scaleX(1.0800);">10</div>
<div class="t" style="left:1042.46px;top:733.00px;font-size:15.55px;color:#f2f2f2;transform:scaleX(1.0800);">20</div>
<div class="t" style="left:1112.86px;top:733.00px;font-size:15.55px;color:#f2f2f2;transform:scaleX(1.0800);">30</div>
<div class="t" style="left:1183.31px;top:733.00px;font-size:15.55px;color:#f2f2f2;transform:scaleX(1.0800);">40</div>
<div class="t" style="left:1253.23px;top:733.00px;font-size:15.55px;color:#f2f2f2;transform:scaleX(1.0800);">50</div>
<div class="t" style="left:1323.25px;top:733.00px;font-size:15.55px;color:#f2f2f2;transform:scaleX(1.0800);">60</div>
<div class="t" style="left:1393.44px;top:733.00px;font-size:15.55px;color:#f2f2f2;transform:scaleX(1.0800);">70</div>
<div class="t" style="left:1463.77px;top:733.00px;font-size:15.55px;color:#f2f2f2;transform:scaleX(1.0800);">80</div>
<div class="t" style="left:1533.91px;top:733.00px;font-size:15.55px;color:#f2f2f2;transform:scaleX(1.0800);">90</div>
<div class="t" style="left:1603.62px;top:733.00px;font-size:15.55px;color:#f2f2f2;transform:scaleX(1.0800);">100</div>
<div class="b" style="left:745.50px;top:754.70px;width:924.50px;height:27.77px;background:linear-gradient(#464646,#3c3c3c);"></div>
<div class="b" style="left:745.50px;top:754.70px;width:14.50px;height:27.77px;background:linear-gradient(90deg,#262626,#2c2c2c);"></div>
<div class="t" style="left:764.43px;top:761.00px;font-size:16.42px;color:#f2f2f2;transform:scaleX(0.9258);">x: CIE31</div>
<div class="t" style="left:902.24px;top:761.00px;font-size:16.42px;color:#f2f2f2;transform:scaleX(1.0350);">0,51</div>
<div class="t" style="left:972.44px;top:761.00px;font-size:16.42px;color:#f2f2f2;transform:scaleX(1.0350);">0,31</div>
<div class="t" style="left:1042.64px;top:761.00px;font-size:16.42px;color:#f2f2f2;transform:scaleX(1.0350);">0,31</div>
<div class="t" style="left:1112.84px;top:761.00px;font-size:16.42px;color:#f2f2f2;transform:scaleX(1.0350);">0,32</div>
<div class="t" style="left:1183.04px;top:761.00px;font-size:16.42px;color:#f2f2f2;transform:scaleX(1.0350);">0,32</div>
<div class="t" style="left:1253.24px;top:761.00px;font-size:16.42px;color:#f2f2f2;transform:scaleX(1.0350);">0,32</div>
<div class="t" style="left:1323.44px;top:761.00px;font-size:16.42px;color:#f2f2f2;transform:scaleX(1.0350);">0,32</div>
<div class="t" style="left:1393.64px;top:761.00px;font-size:16.42px;color:#f2f2f2;transform:scaleX(1.0350);">0,32</div>
<div class="t" style="left:1463.84px;top:761.00px;font-size:16.42px;color:#f2f2f2;transform:scaleX(1.0350);">0,32</div>
<div class="t" style="left:1534.04px;top:761.00px;font-size:16.42px;color:#f2f2f2;transform:scaleX(1.0350);">0,32</div>
<div class="t" style="left:1604.24px;top:761.00px;font-size:16.42px;color:#f2f2f2;transform:scaleX(1.0350);">0,32</div>
<div class="b" style="left:745.50px;top:782.17px;width:924.50px;height:27.77px;background:linear-gradient(#828282,#747474);"></div>
<div class="b" style="left:745.50px;top:782.17px;width:14.50px;height:27.77px;background:linear-gradient(90deg,#262626,#3c3c3c);"></div>
<div class="t" style="left:764.56px;top:789.00px;font-size:16.42px;color:#f2f2f2;transform:scaleX(0.9236);">y: CIE31</div>
<div class="t" style="left:902.24px;top:789.00px;font-size:16.42px;color:#f2f2f2;transform:scaleX(1.0350);">0,49</div>
<div class="t" style="left:972.44px;top:789.00px;font-size:16.42px;color:#f2f2f2;transform:scaleX(1.0350);">0,32</div>
<div class="t" style="left:1042.64px;top:789.00px;font-size:16.42px;color:#f2f2f2;transform:scaleX(1.0350);">0,33</div>
<div class="t" style="left:1112.84px;top:789.00px;font-size:16.42px;color:#f2f2f2;transform:scaleX(1.0350);">0,33</div>
<div class="t" style="left:1183.04px;top:789.00px;font-size:16.42px;color:#f2f2f2;transform:scaleX(1.0350);">0,33</div>
<div class="t" style="left:1253.24px;top:789.00px;font-size:16.42px;color:#f2f2f2;transform:scaleX(1.0350);">0,33</div>
<div class="t" style="left:1323.44px;top:789.00px;font-size:16.42px;color:#f2f2f2;transform:scaleX(1.0350);">0,33</div>
<div class="t" style="left:1393.64px;top:789.00px;font-size:16.42px;color:#f2f2f2;transform:scaleX(1.0350);">0,33</div>
<div class="t" style="left:1463.84px;top:789.00px;font-size:16.42px;color:#f2f2f2;transform:scaleX(1.0350);">0,33</div>
<div class="t" style="left:1534.04px;top:789.00px;font-size:16.42px;color:#f2f2f2;transform:scaleX(1.0350);">0,33</div>
<div class="t" style="left:1604.24px;top:789.00px;font-size:16.42px;color:#f2f2f2;transform:scaleX(1.0350);">0,33</div>
<div class="b" style="left:745.50px;top:809.64px;width:924.50px;height:27.77px;background:linear-gradient(#464646,#3c3c3c);"></div>
<div class="b" style="left:745.50px;top:809.64px;width:14.50px;height:27.77px;background:linear-gradient(90deg,#262626,#2c2c2c);"></div>
<div class="t" style="left:764.33px;top:816.00px;font-size:16.42px;color:#f2f2f2;transform:scaleX(0.7427);">Y</div>
<div class="t" style="left:902.24px;top:816.00px;font-size:16.42px;color:#f2f2f2;transform:scaleX(1.0350);">0,02</div>
<div class="t" style="left:972.45px;top:816.00px;font-size:16.42px;color:#f2f2f2;transform:scaleX(1.0350);">3,72</div>
<div class="t" style="left:1042.01px;top:816.00px;font-size:16.42px;color:#f2f2f2;transform:scaleX(1.0350);">12,29</div>
<div class="t" style="left:1112.65px;top:816.00px;font-size:16.42px;color:#f2f2f2;transform:scaleX(1.0350);">28,51</div>
<div class="t" style="left:1183.02px;top:816.00px;font-size:16.42px;color:#f2f2f2;transform:scaleX(1.0350);">54,94</div>
<div class="t" style="left:1253.16px;top:816.00px;font-size:16.42px;color:#f2f2f2;transform:scaleX(1.0350);">88,72</div>
<div class="t" style="left:1322.81px;top:816.00px;font-size:16.42px;color:#f2f2f2;transform:scaleX(1.0350);">122,84</div>
<div class="t" style="left:1393.01px;top:816.00px;font-size:16.42px;color:#f2f2f2;transform:scaleX(1.0350);">167,88</div>
<div class="t" style="left:1463.65px;top:816.00px;font-size:16.42px;color:#f2f2f2;transform:scaleX(1.0350);">230,28</div>
<div class="t" style="left:1534.05px;top:816.00px;font-size:16.42px;color:#f2f2f2;transform:scaleX(1.0350);">310,17</div>
<div class="t" style="left:1604.25px;top:816.00px;font-size:16.42px;color:#f2f2f2;transform:scaleX(1.0350);">387,25</div>
<div class="b" style="left:745.50px;top:837.11px;width:924.50px;height:27.77px;background:linear-gradient(#828282,#747474);"></div>
<div class="b" style="left:745.50px;top:837.11px;width:14.50px;height:27.77px;background:linear-gradient(90deg,#262626,#3c3c3c);"></div>
<div class="t" style="left:764.24px;top:844.00px;font-size:16.42px;color:#f2f2f2;transform:scaleX(0.9734);">Target Y</div>
<div class="t" style="left:902.24px;top:844.00px;font-size:16.42px;color:#f2f2f2;transform:scaleX(1.0350);">0,02</div>
<div class="t" style="left:972.25px;top:844.00px;font-size:16.42px;color:#f2f2f2;transform:scaleX(1.0350);">2,58</div>
<div class="t" style="left:1042.01px;top:844.00px;font-size:16.42px;color:#f2f2f2;transform:scaleX(1.0350);">11,26</div>
<div class="t" style="left:1112.65px;top:844.00px;font-size:16.42px;color:#f2f2f2;transform:scaleX(1.0350);">27,05</div>
<div class="t" style="left:1183.02px;top:844.00px;font-size:16.42px;color:#f2f2f2;transform:scaleX(1.0350);">51,64</div>
<div class="t" style="left:1253.16px;top:844.00px;font-size:16.42px;color:#f2f2f2;transform:scaleX(1.0350);">85,07</div>
<div class="t" style="left:1322.81px;top:844.00px;font-size:16.42px;color:#f2f2f2;transform:scaleX(1.0350);">125,93</div>
<div class="t" style="left:1393.01px;top:844.00px;font-size:16.42px;color:#f2f2f2;transform:scaleX(1.0350);">175,66</div>
<div class="t" style="left:1463.65px;top:844.00px;font-size:16.42px;color:#f2f2f2;transform:scaleX(1.0350);">237,07</div>
<div class="t" style="left:1534.05px;top:844.00px;font-size:16.42px;color:#f2f2f2;transform:scaleX(1.0350);">308,63</div>
<div class="t" style="left:1604.25px;top:844.00px;font-size:16.42px;color:#f2f2f2;transform:scaleX(1.0350);">387,25</div>
<div class="b" style="left:745.50px;top:864.58px;width:924.50px;height:27.77px;background:linear-gradient(#464646,#3c3c3c);"></div>
<div class="b" style="left:745.50px;top:864.58px;width:14.50px;height:27.77px;background:linear-gradient(90deg,#262626,#2c2c2c);"></div>
<div class="t" style="left:763.73px;top:871.00px;font-size:16.42px;color:#f2f2f2;transform:scaleX(1.0543);">Gamma Log/Log</div>
<div class="t" style="left:901.61px;top:871.00px;font-size:16.42px;color:#f2f2f2;transform:scaleX(1.0350);">1,06</div>
<div class="t" style="left:972.25px;top:871.00px;font-size:16.42px;color:#f2f2f2;transform:scaleX(1.0350);">2,03</div>
<div class="t" style="left:1042.45px;top:871.00px;font-size:16.42px;color:#f2f2f2;transform:scaleX(1.0350);">2,14</div>
<div class="t" style="left:1112.65px;top:871.00px;font-size:16.42px;color:#f2f2f2;transform:scaleX(1.0350);">2,16</div>
<div class="t" style="left:1182.85px;top:871.00px;font-size:16.42px;color:#f2f2f2;transform:scaleX(1.0350);">2,13</div>
<div class="t" style="left:1253.05px;top:871.00px;font-size:16.42px;color:#f2f2f2;transform:scaleX(1.0350);">2,14</div>
<div class="t" style="left:1323.25px;top:871.00px;font-size:16.42px;color:#f2f2f2;transform:scaleX(1.0350);">2,25</div>
<div class="t" style="left:1393.45px;top:871.00px;font-size:16.42px;color:#f2f2f2;transform:scaleX(1.0350);">2,33</div>
<div class="t" style="left:1463.65px;top:871.00px;font-size:16.42px;color:#f2f2f2;transform:scaleX(1.0350);">2,33</div>
<div class="t" style="left:1533.85px;top:871.00px;font-size:16.42px;color:#f2f2f2;transform:scaleX(1.0350);">2,15</div>
<div class="t" style="left:1604.05px;top:871.00px;font-size:16.42px;color:#f2f2f2;transform:scaleX(1.0350);">2,20</div>
<div class="b" style="left:745.50px;top:892.05px;width:924.50px;height:27.77px;background:linear-gradient(#828282,#747474);"></div>
<div class="b" style="left:745.50px;top:892.05px;width:14.50px;height:27.77px;background:linear-gradient(90deg,#262626,#3c3c3c);"></div>
<div class="t" style="left:763.89px;top:898.00px;font-size:16.42px;color:#f2f2f2;transform:scaleX(0.8511);">CCT</div>
<div class="t" style="left:902.05px;top:898.00px;font-size:16.42px;color:#f2f2f2;transform:scaleX(1.0350);">2645,00</div>
<div class="t" style="left:972.24px;top:898.00px;font-size:16.42px;color:#f2f2f2;transform:scaleX(1.0350);">6694,00</div>
<div class="t" style="left:1042.44px;top:898.00px;font-size:16.42px;color:#f2f2f2;transform:scaleX(1.0350);">6440,00</div>
<div class="t" style="left:1112.64px;top:898.00px;font-size:16.42px;color:#f2f2f2;transform:scaleX(1.0350);">6327,00</div>
<div class="t" style="left:1182.84px;top:898.00px;font-size:16.42px;color:#f2f2f2;transform:scaleX(1.0350);">6285,00</div>
<div class="t" style="left:1253.04px;top:898.00px;font-size:16.42px;color:#f2f2f2;transform:scaleX(1.0350);">6257,00</div>
<div class="t" style="left:1323.24px;top:898.00px;font-size:16.42px;color:#f2f2f2;transform:scaleX(1.0350);">6319,00</div>
<div class="t" style="left:1393.44px;top:898.00px;font-size:16.42px;color:#f2f2f2;transform:scaleX(1.0350);">6288,00</div>
<div class="t" style="left:1463.64px;top:898.00px;font-size:16.42px;color:#f2f2f2;transform:scaleX(1.0350);">6302,00</div>
<div class="t" style="left:1533.84px;top:898.00px;font-size:16.42px;color:#f2f2f2;transform:scaleX(1.0350);">6330,00</div>
<div class="t" style="left:1604.04px;top:898.00px;font-size:16.42px;color:#f2f2f2;transform:scaleX(1.0350);">6318,00</div>
<div class="b" style="left:745.50px;top:919.52px;width:924.50px;height:27.77px;background:linear-gradient(#464646,#3c3c3c);"></div>
<div class="b" style="left:745.50px;top:919.52px;width:14.50px;height:27.77px;background:linear-gradient(90deg,#262626,#2c2c2c);"></div>
<div class="t" style="left:764.12px;top:926.00px;font-size:16.42px;color:#f2f2f2;transform:scaleX(0.9903);">ΔE 2000</div>
<div class="t" style="left:902.24px;top:926.00px;font-size:16.42px;color:#f2f2f2;transform:scaleX(1.0350);">0,10</div>
<div class="t" style="left:971.81px;top:926.00px;font-size:16.42px;color:#f2f2f2;transform:scaleX(1.0350);">1,98</div>
<div class="t" style="left:1042.64px;top:926.00px;font-size:16.42px;color:#f2f2f2;transform:scaleX(1.0350);">0,88</div>
<div class="t" style="left:1112.84px;top:926.00px;font-size:16.42px;color:#f2f2f2;transform:scaleX(1.0350);">0,98</div>
<div class="t" style="left:1182.41px;top:926.00px;font-size:16.42px;color:#f2f2f2;transform:scaleX(1.0350);">1,54</div>
<div class="t" style="left:1252.61px;top:926.00px;font-size:16.42px;color:#f2f2f2;transform:scaleX(1.0350);">1,64</div>
<div class="t" style="left:1322.81px;top:926.00px;font-size:16.42px;color:#f2f2f2;transform:scaleX(1.0350);">1,30</div>
<div class="t" style="left:1393.01px;top:926.00px;font-size:16.42px;color:#f2f2f2;transform:scaleX(1.0350);">1,78</div>
<div class="t" style="left:1463.21px;top:926.00px;font-size:16.42px;color:#f2f2f2;transform:scaleX(1.0350);">1,63</div>
<div class="t" style="left:1533.41px;top:926.00px;font-size:16.42px;color:#f2f2f2;transform:scaleX(1.0350);">1,41</div>
<div class="t" style="left:1603.61px;top:926.00px;font-size:16.42px;color:#f2f2f2;transform:scaleX(1.0350);">1,62</div>
<div class="b" style="left:0.00px;top:967.00px;width:1920.00px;height:73.00px;background:#303030;"></div>
<div class="b" style="left:1.30px;top:970.00px;width:139.60px;height:68.50px;background:linear-gradient(#969696 0,#8a8a8a 8%,#6e6e6e 60%,#5c5c5c 100%);border-radius:5px;box-shadow:inset 0 1px 0 #a8a8a8;"></div>
<div class="b" style="left:6.90px;top:975.60px;width:128.40px;height:40.40px;background:#000000;border-radius:3.5px;box-shadow:inset 0 1px 1.5px rgba(0,0,0,.55),0 0 0 .5px rgba(70,70,70,.5);"></div>
<div class="t" style="left:67.56px;top:1024.00px;font-size:10.76px;color:#262626;font-weight:bold;transform:scaleX(1.1200);">0</div>
<div class="b" style="left:143.30px;top:970.00px;width:139.60px;height:68.50px;background:linear-gradient(#969696 0,#8a8a8a 8%,#6e6e6e 60%,#5c5c5c 100%);border-radius:5px;box-shadow:inset 0 1px 0 #a8a8a8;"></div>
<div class="b" style="left:148.90px;top:975.60px;width:128.40px;height:40.40px;background:#1c1c1c;border-radius:3.5px;box-shadow:inset 0 1px 1.5px rgba(0,0,0,.55),0 0 0 .5px rgba(70,70,70,.5);"></div>
<div class="t" style="left:206.07px;top:1024.00px;font-size:10.76px;color:#262626;font-weight:bold;transform:scaleX(1.1200);">10</div>
<div class="b" style="left:285.30px;top:970.00px;width:139.60px;height:68.50px;background:linear-gradient(#969696 0,#8a8a8a 8%,#6e6e6e 60%,#5c5c5c 100%);border-radius:5px;box-shadow:inset 0 1px 0 #a8a8a8;"></div>
<div class="b" style="left:290.90px;top:975.60px;width:128.40px;height:40.40px;background:#333333;border-radius:3.5px;box-shadow:inset 0 1px 1.5px rgba(0,0,0,.55),0 0 0 .5px rgba(70,70,70,.5);"></div>
<div class="t" style="left:348.24px;top:1024.00px;font-size:10.76px;color:#262626;font-weight:bold;transform:scaleX(1.1200);">20</div>
<div class="b" style="left:427.30px;top:970.00px;width:139.60px;height:68.50px;background:linear-gradient(#969696 0,#8a8a8a 8%,#6e6e6e 60%,#5c5c5c 100%);border-radius:5px;box-shadow:inset 0 1px 0 #a8a8a8;"></div>
<div class="b" style="left:432.90px;top:975.60px;width:128.40px;height:40.40px;background:#4d4d4d;border-radius:3.5px;box-shadow:inset 0 1px 1.5px rgba(0,0,0,.55),0 0 0 .5px rgba(70,70,70,.5);"></div>
<div class="t" style="left:490.31px;top:1024.00px;font-size:10.76px;color:#262626;font-weight:bold;transform:scaleX(1.1200);">30</div>
<div class="b" style="left:569.30px;top:970.00px;width:139.60px;height:68.50px;background:linear-gradient(#969696 0,#8a8a8a 8%,#6e6e6e 60%,#5c5c5c 100%);border-radius:5px;box-shadow:inset 0 1px 0 #a8a8a8;"></div>
<div class="b" style="left:574.90px;top:975.60px;width:128.40px;height:40.40px;background:#676767;border-radius:3.5px;box-shadow:inset 0 1px 1.5px rgba(0,0,0,.55),0 0 0 .5px rgba(70,70,70,.5);"></div>
<div class="t" style="left:632.36px;top:1024.00px;font-size:10.76px;color:#262626;font-weight:bold;transform:scaleX(1.1200);">40</div>
<div class="b" style="left:711.30px;top:970.00px;width:139.60px;height:68.50px;background:linear-gradient(#969696 0,#8a8a8a 8%,#6e6e6e 60%,#5c5c5c 100%);border-radius:5px;box-shadow:inset 0 1px 0 #a8a8a8;"></div>
<div class="b" style="left:716.90px;top:975.60px;width:128.40px;height:40.40px;background:#818181;border-radius:3.5px;box-shadow:inset 0 1px 1.5px rgba(0,0,0,.55),0 0 0 .5px rgba(70,70,70,.5);"></div>
<div class="t" style="left:774.26px;top:1024.00px;font-size:10.76px;color:#262626;font-weight:bold;transform:scaleX(1.1200);">50</div>
<div class="b" style="left:853.30px;top:970.00px;width:139.60px;height:68.50px;background:linear-gradient(#969696 0,#8a8a8a 8%,#6e6e6e 60%,#5c5c5c 100%);border-radius:5px;box-shadow:inset 0 1px 0 #a8a8a8;"></div>
<div class="b" style="left:858.90px;top:975.60px;width:128.40px;height:40.40px;background:#9a9a9a;border-radius:3.5px;box-shadow:inset 0 1px 1.5px rgba(0,0,0,.55),0 0 0 .5px rgba(70,70,70,.5);"></div>
<div class="t" style="left:916.23px;top:1024.00px;font-size:10.76px;color:#262626;font-weight:bold;transform:scaleX(1.1200);">60</div>
<div class="b" style="left:995.30px;top:970.00px;width:139.60px;height:68.50px;background:linear-gradient(#969696 0,#8a8a8a 8%,#6e6e6e 60%,#5c5c5c 100%);border-radius:5px;box-shadow:inset 0 1px 0 #a8a8a8;"></div>
<div class="b" style="left:1000.90px;top:975.60px;width:128.40px;height:40.40px;background:#b4b4b4;border-radius:3.5px;box-shadow:inset 0 1px 1.5px rgba(0,0,0,.55),0 0 0 .5px rgba(70,70,70,.5);"></div>
<div class="t" style="left:1058.19px;top:1024.00px;font-size:10.76px;color:#262626;font-weight:bold;transform:scaleX(1.1200);">70</div>
<div class="b" style="left:1137.30px;top:970.00px;width:139.60px;height:68.50px;background:linear-gradient(#969696 0,#8a8a8a 8%,#6e6e6e 60%,#5c5c5c 100%);border-radius:5px;box-shadow:inset 0 1px 0 #a8a8a8;"></div>
<div class="b" style="left:1142.90px;top:975.60px;width:128.40px;height:40.40px;background:#cdcdcd;border-radius:3.5px;box-shadow:inset 0 1px 1.5px rgba(0,0,0,.55),0 0 0 .5px rgba(70,70,70,.5);"></div>
<div class="t" style="left:1200.26px;top:1024.00px;font-size:10.76px;color:#262626;font-weight:bold;transform:scaleX(1.1200);">80</div>
<div class="b" style="left:1279.30px;top:970.00px;width:139.60px;height:68.50px;background:linear-gradient(#969696 0,#8a8a8a 8%,#6e6e6e 60%,#5c5c5c 100%);border-radius:5px;box-shadow:inset 0 1px 0 #a8a8a8;"></div>
<div class="b" style="left:1284.90px;top:975.60px;width:128.40px;height:40.40px;background:#e7e7e7;border-radius:3.5px;box-shadow:inset 0 1px 1.5px rgba(0,0,0,.55),0 0 0 .5px rgba(70,70,70,.5);"></div>
<div class="t" style="left:1342.24px;top:1024.00px;font-size:10.76px;color:#262626;font-weight:bold;transform:scaleX(1.1200);">90</div>
<div class="b" style="left:1421.30px;top:970.00px;width:139.60px;height:68.50px;background:#222;border-radius:5px;"></div>
<div class="b" style="left:1426.90px;top:975.60px;width:128.40px;height:40.40px;background:#ffffff;border-radius:3.5px;box-shadow:inset 0 1px 1.5px rgba(0,0,0,.55);"></div>
<div class="t" style="left:1480.72px;top:1024.00px;font-size:10.76px;color:#fff;font-weight:bold;transform:scaleX(1.1200);">100</div>
<div class="b" style="left:1564.20px;top:970.00px;width:54.80px;height:68.70px;background:linear-gradient(#929292,#6a6a6a);border-radius:5px;"></div>
<div class="b" style="left:1564.20px;top:989.80px;width:55.00px;height:1.20px;background:#4a4a4a;"></div>
<div class="b" style="left:1620.20px;top:970.00px;width:51.00px;height:33.20px;background:linear-gradient(#8c8c8c 0,#7a7a7a 50%,#5e5e5e 100%);box-shadow:inset 0 1px 0 #a0a0a0;"></div>
<div class="b" style="left:1672.20px;top:970.00px;width:49.90px;height:33.20px;background:linear-gradient(#8c8c8c 0,#7a7a7a 50%,#5e5e5e 100%);box-shadow:inset 0 1px 0 #a0a0a0;"></div>
<div class="b" style="left:1723.10px;top:970.00px;width:50.40px;height:33.20px;background:linear-gradient(#8c8c8c 0,#7a7a7a 50%,#5e5e5e 100%);box-shadow:inset 0 1px 0 #a0a0a0;"></div>
<div class="b" style="left:1774.50px;top:970.00px;width:49.50px;height:33.20px;background:linear-gradient(#8c8c8c 0,#7a7a7a 50%,#5e5e5e 100%);box-shadow:inset 0 1px 0 #a0a0a0;"></div>
<div class="b" style="left:1825.00px;top:970.00px;width:49.80px;height:33.20px;background:linear-gradient(#8c8c8c 0,#7a7a7a 50%,#5e5e5e 100%);box-shadow:inset 0 1px 0 #a0a0a0;"></div>
<div class="b" style="left:1876.30px;top:970.00px;width:44.00px;height:33.20px;background:linear-gradient(90deg,#3a3a3a,#262626);"></div>
<div class="b" style="left:1620.20px;top:1005.00px;width:153.30px;height:35.00px;background:linear-gradient(#9c9c9c 0,#8a8a8a 45%,#6c6c6c 100%);box-shadow:inset 0 1px 0 #b4b4b4;border-radius:4px 0 0 0;"></div>
<div class="b" style="left:1774.60px;top:1005.00px;width:146.00px;height:35.00px;background:linear-gradient(#9c9c9c 0,#8a8a8a 45%,#6c6c6c 100%);box-shadow:inset 0 1px 0 #b4b4b4;"></div>
<svg width="1920" height="1040" viewBox="0 0 1920 1040"><defs><linearGradient id="gic" x1="0" y1="0" x2="0" y2="1"><stop offset="0" stop-color="#6a6a6a"/><stop offset="1" stop-color="#9c9c9c"/></linearGradient><linearGradient id="gic2" x1="0" y1="0" x2="0" y2="1"><stop offset="0" stop-color="#7c7c7c"/><stop offset="1" stop-color="#a8a8a8"/></linearGradient><linearGradient id="gsq" x1="0" y1="0" x2="0" y2="1"><stop offset="0" stop-color="#c6c6c6"/><stop offset="0.5" stop-color="#b2b2b2"/><stop offset="0.5" stop-color="#8c8c8c"/><stop offset="1" stop-color="#a2a2a2"/></linearGradient><linearGradient id="gsq2" x1="0" y1="0" x2="0" y2="1"><stop offset="0" stop-color="#2c2c2c"/><stop offset="0.48" stop-color="#262626"/><stop offset="0.48" stop-color="#000"/><stop offset="1" stop-color="#000"/></linearGradient></defs>
<circle cx="1591.5" cy="979.8" r="8" fill="url(#gic)"/><path d="M1586.8 982.2h9.4l-4.7 -5z" fill="#303030"/>
<rect x="1575" y="998.6" width="32.8" height="32" rx="4" fill="url(#gsq)" stroke="#222" stroke-width="2.2"/><rect x="1583.9" y="1007.5" width="15.5" height="15.4" fill="url(#gsq2)"/>
<circle cx="1646.3" cy="986.8" r="11" fill="url(#gic)"/>
<circle cx="1697.7" cy="986.8" r="11" fill="url(#gic)"/>
<circle cx="1748.8" cy="986.8" r="11" fill="url(#gic)"/>
<circle cx="1799.6" cy="986.8" r="11" fill="url(#gic)"/>
<circle cx="1850.3" cy="986.8" r="11" fill="url(#gic)"/>
<rect x="1642" y="982.5" width="8.6" height="8.6" fill="#333"/>
<path d="M1694.3 981.3v11l9 -5.5z" fill="#333"/>
<path d="M1745.2 981.3h-2.6v11h2.6M1752.4 981.3h2.6v11h-2.6" fill="none" stroke="#333" stroke-width="2.1"/>
<path d="M1746.3 986.8h1.8M1749.5 986.8h1.8" stroke="#333" stroke-width="2"/>
<path d="M1799.6 986.8c-2.2 -3.4 -6.2 -3 -6.2 0s4 3.4 6.2 0s6.2 -3 6.2 0s-4 3.4 -6.2 0z" fill="none" stroke="#333" stroke-width="1.7"/>
<g fill="none" stroke="#333" stroke-width="2"><path d="M1845.3 986.2a5 5 0 0 1 8.8 -3"/><path d="M1855.3 987.4a5 5 0 0 1 -8.8 3"/></g>
<path d="M1852.5 984l3.4 0l0 -3.6z M1848.1 989.6l-3.4 0l0 3.6z" fill="#333" stroke="#333" stroke-width=".8"/>
<circle cx="1902.3" cy="987.6" r="11.5" fill="#3c3c3c"/>
<circle cx="1654.8" cy="1022.3" r="10.5" fill="url(#gic2)"/><circle cx="1896.2" cy="1022.3" r="10.5" fill="url(#gic2)"/>
<path d="M1654 1016.6l-4.2 5.7l4.2 5.7M1659.4 1016.6l-4.2 5.7l4.2 5.7" fill="none" stroke="#404040" stroke-width="1.6"/>
<path d="M1891.6 1016.6l4.2 5.7l-4.2 5.7M1897 1016.6l4.2 5.7l-4.2 5.7" fill="none" stroke="#404040" stroke-width="1.6"/></svg>
<div class="t" style="left:1683.87px;top:1010.00px;font-size:24.13px;color:#3c3c3c;transform:scaleX(1.0755);-webkit-text-stroke:.75px #3c3c3c;text-shadow:0 1px 0 rgba(255,255,255,.22);">Back</div>
<div class="t" style="left:1804.32px;top:1010.00px;font-size:24.13px;color:#3c3c3c;transform:scaleX(1.2032);-webkit-text-stroke:.75px #3c3c3c;text-shadow:0 1px 0 rgba(255,255,255,.22);">Next</div>
</body></html>
